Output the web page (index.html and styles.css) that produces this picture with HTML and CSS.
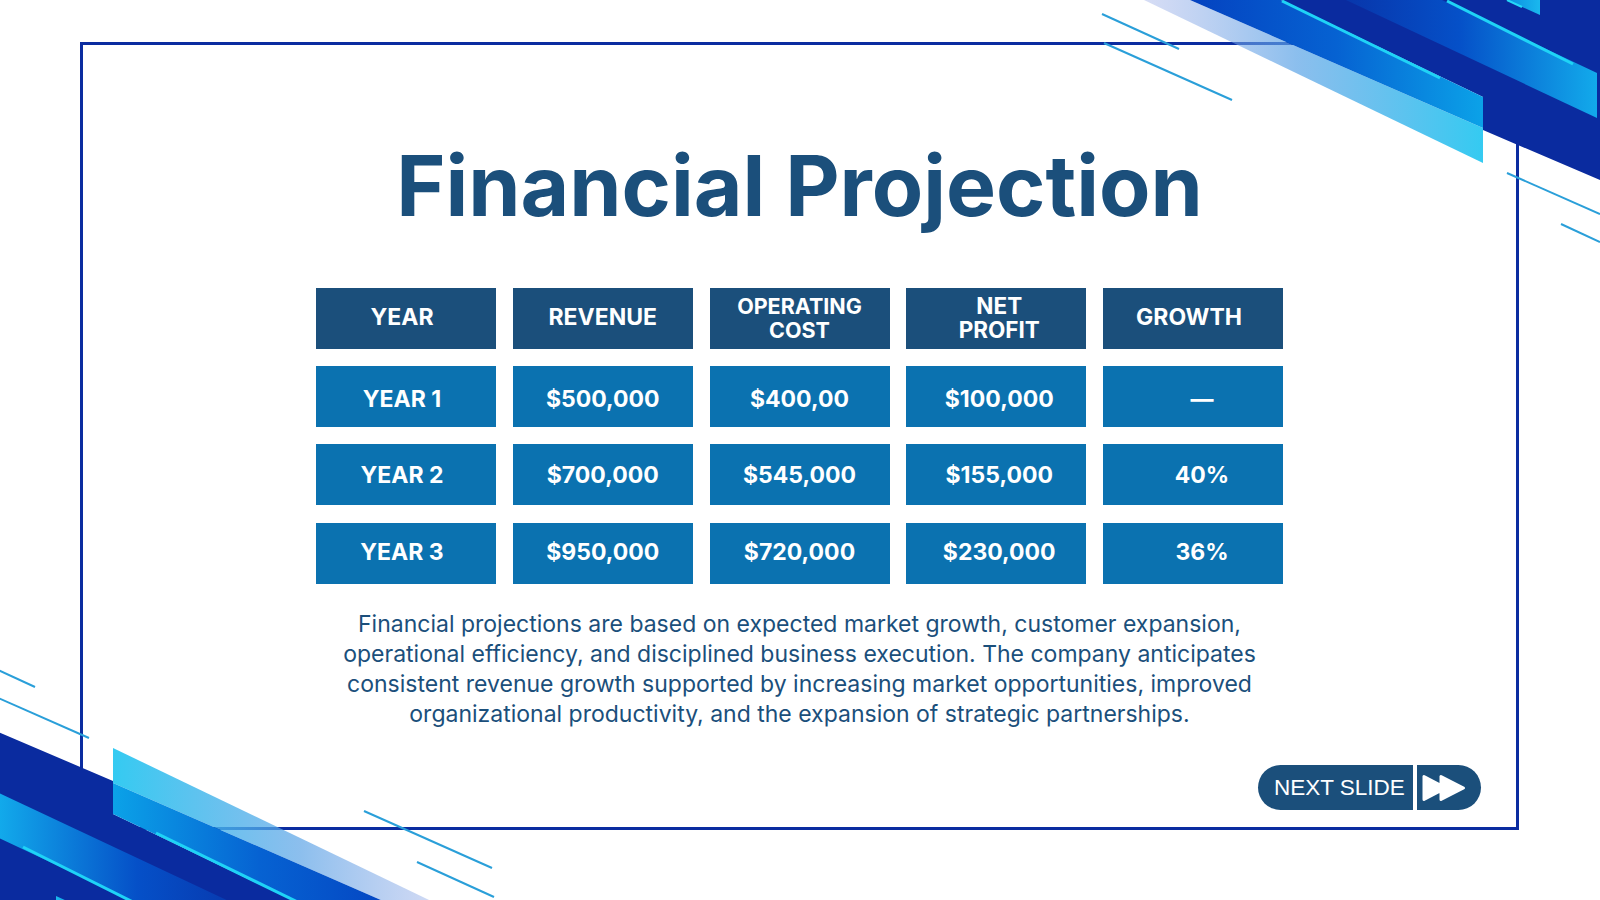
FILE: index.html
```
<!DOCTYPE html>
<html lang="en">
<head>
<meta charset="utf-8">
<title>Financial Projection</title>
<link rel="stylesheet" href="styles.css">
</head>
<body>
<div class="slide">
  <div class="frame">
    <h1 class="title">Financial Projection</h1>
    <div class="table">
      <div class="cell head c1">YEAR</div>
      <div class="cell head">REVENUE</div>
      <div class="cell head two small"><span class="ln">OPERATING</span><span class="ln">COST</span></div>
      <div class="cell head two mid c4"><span class="ln">NET</span><span class="ln">PROFIT</span></div>
      <div class="cell head c5h">GROWTH</div>

      <div class="cell body r1 c1">YEAR 1</div>
      <div class="cell body r1">$500,000</div>
      <div class="cell body r1">$400,00</div>
      <div class="cell body r1 c4">$100,000</div>
      <div class="cell body r1 c5">—</div>

      <div class="cell body r2 c1">YEAR 2</div>
      <div class="cell body r2">$700,000</div>
      <div class="cell body r2">$545,000</div>
      <div class="cell body r2 c4">$155,000</div>
      <div class="cell body r2 c5">40%</div>

      <div class="cell body r3 c1">YEAR 3</div>
      <div class="cell body r3">$950,000</div>
      <div class="cell body r3">$720,000</div>
      <div class="cell body r3 c4">$230,000</div>
      <div class="cell body r3 c5">36%</div>
    </div>
    <p class="note">Financial projections are based on expected market growth, customer expansion,<br>operational efficiency, and disciplined business execution. The company anticipates<br>consistent revenue growth supported by increasing market opportunities, improved<br>organizational productivity, and the expansion of strategic partnerships.</p>
    <div class="footer">
      <div class="next">
        <div class="next-label">NEXT SLIDE</div>
        <div class="next-icon">
          <svg class="ff" width="44" height="28" viewBox="0 0 44 28">
            <path d="M2 2.5 L2 25.5 L24 14 Z M19 2.5 L19 25.5 L41.5 14 Z" fill="#ffffff" stroke="#ffffff" stroke-width="3" stroke-linejoin="round"/>
          </svg>
        </div>
      </div>
    </div>
  </div>

  <svg class="decor" width="1600" height="900" viewBox="0 0 1600 900">
    <defs>
      <linearGradient id="gLight" gradientUnits="userSpaceOnUse" x1="1144" y1="0" x2="1483" y2="0">
        <stop offset="0" stop-color="#9aaae6" stop-opacity="0.4"/>
        <stop offset="0.45" stop-color="#5aa3e6" stop-opacity="0.7"/>
        <stop offset="1" stop-color="#2ec9f1" stop-opacity="0.97"/>
      </linearGradient>
      <linearGradient id="gMed" gradientUnits="userSpaceOnUse" x1="1190" y1="0" x2="1483" y2="0">
        <stop offset="0" stop-color="#0442c0"/>
        <stop offset="0.5" stop-color="#0662d2"/>
        <stop offset="1" stop-color="#0ba2e8"/>
      </linearGradient>
      <linearGradient id="gSec" gradientUnits="userSpaceOnUse" x1="1346" y1="0" x2="1597" y2="0">
        <stop offset="0" stop-color="#0836ab"/>
        <stop offset="0.45" stop-color="#0550c8"/>
        <stop offset="1" stop-color="#12aaeb"/>
      </linearGradient>
      <linearGradient id="gTop" gradientUnits="userSpaceOnUse" x1="1507" y1="0" x2="1540" y2="0">
        <stop offset="0" stop-color="#0a8ee0"/>
        <stop offset="1" stop-color="#1ab8ee"/>
      </linearGradient>
      <g id="corner">
        <polygon fill="#0a2b9f" points="1281,0 1600,0 1600,180 1483,130 1483,97"/>
        <polygon fill="url(#gSec)" points="1346,0 1442,0 1597,73 1597,118"/>
        <polygon fill="url(#gLight)" points="1144,0 1190,0 1483,128 1483,163"/>
        <polygon fill="url(#gMed)" points="1190,0 1281,0 1483,97 1483,128"/>
        <line x1="1282" y1="1" x2="1440" y2="78" stroke="#1fd3f6" stroke-width="3"/>
        <line x1="1447" y1="1" x2="1573" y2="64" stroke="#1fd3f6" stroke-width="3"/>
        <polygon fill="url(#gTop)" points="1507,0 1540,0 1540,15"/>
        <line x1="1507" y1="0" x2="1522" y2="7" stroke="#25d8f8" stroke-width="2"/>
        <line x1="1102" y1="14" x2="1179" y2="49" stroke="#2a9fd9" stroke-width="2"/>
        <line x1="1104" y1="43" x2="1232" y2="100" stroke="#2a9fd9" stroke-width="2"/>
        <line x1="1507" y1="173" x2="1600" y2="214" stroke="#2a9fd9" stroke-width="2"/>
        <line x1="1561" y1="224" x2="1600" y2="242" stroke="#2a9fd9" stroke-width="2"/>
      </g>
    </defs>
    <use href="#corner"/>
    <use href="#corner" transform="rotate(180 798 455.5)"/>
  </svg>
</div>
</body>
</html>
```
FILE: styles.css
```
html, body {
  margin: 0;
  padding: 0;
  background: #ffffff;
}

.slide {
  position: relative;
  width: 1600px;
  height: 900px;
  overflow: hidden;
  background: #ffffff;
}

.frame {
  margin: 42px 0 0 80px;
  width: 1439px;
  height: 788px;
  box-sizing: border-box;
  border: 3px solid #0b2ca0;
  display: flex;
  flex-direction: column;
  align-items: center;
}

.title {
  margin: 98.6px 0 0 0;
  font-family: Inter, "Noto Sans", sans-serif;
  font-weight: 700;
  font-size: 84px;
  line-height: 84px;
  letter-spacing: 0;
  color: #1b4f7b;
}

.table {
  margin-top: 60px;
  display: grid;
  grid-template-columns: repeat(5, 180px);
  grid-auto-rows: 61px;
  column-gap: 16.75px;
  row-gap: 17.4px;
}

.cell {
  display: flex;
  align-items: center;
  justify-content: center;
  box-sizing: border-box;
  color: #ffffff;
  font-family: Inter, "Noto Sans", sans-serif;
  font-weight: 700;
  font-size: 23px;
  line-height: 1.2;
  text-align: center;
}

.two {
  flex-direction: column;
}

.ln {
  display: block;
  height: 24.3px;
  line-height: 24.3px;
}

.head {
  background: #1b4f7b;
}

.body {
  background: #0b72b0;
}

.small {
  font-size: 21.5px;
}

.mid {
  font-size: 22.5px;
}

.r1 {
  padding-top: 6px;
}

.r2 {
  padding-top: 2px;
}

.r3 {
  padding-bottom: 1px;
}

.c1 {
  padding-right: 8px;
}

.c4 {
  padding-left: 6px;
}

.c5 {
  padding-left: 18px;
}

.c5h {
  padding-right: 8px;
}

.note {
  margin: 25.6px 0 0 0;
  font-family: Inter, "Noto Sans", sans-serif;
  font-weight: 400;
  font-size: 23px;
  line-height: 30px;
  color: #1b4f7b;
  text-align: center;
}

.footer {
  align-self: stretch;
  display: flex;
  justify-content: flex-end;
  padding-right: 35px;
  margin-top: 35.7px;
}

.next {
  display: flex;
  gap: 4px;
  height: 45px;
}

.next-label {
  width: 155px;
  box-sizing: border-box;
  padding-left: 16px;
  background: #1b4f7b;
  border-radius: 22.5px 0 0 22.5px;
  display: flex;
  align-items: center;
  font-family: "Liberation Sans", Arial, sans-serif;
  font-size: 22.5px;
  color: #ffffff;
}

.next-icon {
  width: 64px;
  box-sizing: border-box;
  padding-left: 5px;
  background: #1b4f7b;
  border-radius: 0 22.5px 22.5px 0;
  display: flex;
  align-items: center;
}

.ff {
  display: block;
}

.decor {
  position: absolute;
  left: 0;
  top: 0;
  z-index: 1;
  pointer-events: none;
}
```
